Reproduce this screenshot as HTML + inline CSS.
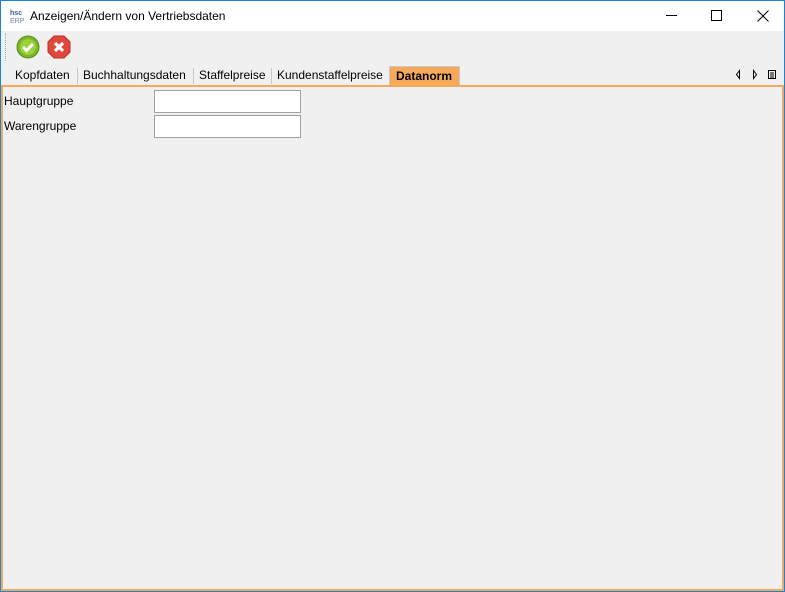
<!DOCTYPE html>
<html><head><style>
*{margin:0;padding:0;box-sizing:border-box}
body{width:785px;height:592px;background:#f0f0f0;font-family:"Liberation Sans",Arial,sans-serif;font-size:12px;color:#000;position:relative;overflow:hidden}
.frame{position:absolute;left:0;top:0;width:785px;height:592px;border:1px solid #1883d7;}
.title{position:absolute;left:1px;top:1px;width:783px;height:30px;background:#fff}
.title span{position:absolute;left:29px;top:8px;font-size:12px}
.tab{position:absolute;top:66px;height:20px;line-height:19px;font-size:12px;padding:0 4px}
.sep{position:absolute;top:68px;width:1px;height:16px;background:#c8c8c8}
.content{position:absolute;left:1px;top:85px;width:783px;height:506px;border:2px solid #f7a95a;border-bottom-width:2px}
.lbl{position:absolute;left:4px;font-size:12px}
.inp{position:absolute;left:154px;width:147px;height:23px;background:#fff;border:1px solid #a0a0a0}
</style></head><body>
<div class="frame"></div>
<div class="title">
<svg style="position:absolute;left:8px;top:7px" width="16" height="16" viewBox="0 0 16 16"><text x="1" y="7" font-size="7" font-weight="bold" fill="#3b5a8a" font-family="Liberation Sans">hsc</text><text x="1" y="15" font-size="7" fill="#6a84aa" font-family="Liberation Sans">ERP</text></svg>
<span>Anzeigen/Ändern von Vertriebsdaten</span>
<div style="position:absolute;left:665px;top:14px;width:11px;height:1px;background:#000"></div>
<div style="position:absolute;left:710px;top:9px;width:11px;height:11px;border:1px solid #000"></div>
<svg style="position:absolute;left:756px;top:9px" width="12" height="12"><path d="M0.5 0.5L11.5 11.5M11.5 0.5L0.5 11.5" stroke="#000" stroke-width="1"/></svg>
</div>
<div style="position:absolute;left:5px;top:33px;width:2px;height:28px;border-left:1px dotted #aaa"></div>
<svg style="position:absolute;left:16px;top:35px" width="24" height="24"><circle cx="12" cy="12" r="11" fill="#7ab52a" stroke="#5a8f1a"/><circle cx="12" cy="12" r="8" fill="#9bd13a"/><path d="M7 12l3.5 3.5L17 9" stroke="#fff" stroke-width="3" fill="none"/></svg>
<svg style="position:absolute;left:47px;top:35px" width="24" height="24"><polygon points="7,1 17,1 23,7 23,17 17,23 7,23 1,17 1,7" fill="#e0483a" stroke="#b83228"/><path d="M8 8l8 8M16 8l-8 8" stroke="#fff" stroke-width="3.2"/></svg>
<div class="tab" style="left:11px">Kopfdaten</div>
<div class="sep" style="left:77px"></div>
<div class="tab" style="left:79px">Buchhaltungsdaten</div>
<div class="sep" style="left:193px"></div>
<div class="tab" style="left:195px">Staffelpreise</div>
<div class="sep" style="left:271px"></div>
<div class="tab" style="left:273px">Kundenstaffelpreise</div>
<div class="tab" style="left:389px;width:71px;background:#f7a95a;border:1px solid #c9c9c9;border-bottom:none;font-weight:bold;padding-left:6px">Datanorm</div>
<svg style="position:absolute;left:735px;top:69px" width="45" height="11"><path d="M4.5 1.5L1.5 5.5L4.5 9.5Z" fill="none" stroke="#000"/><path d="M18.5 1.5L21.5 5.5L18.5 9.5Z" fill="none" stroke="#000"/><rect x="33.5" y="1.5" width="7" height="8" fill="none" stroke="#000"/><path d="M35 4h4M35 6h4M35 8h4" stroke="#000"/></svg>
<div class="content"></div>
<div class="lbl" style="top:94px">Hauptgruppe</div>
<div class="inp" style="top:90px"></div>
<div class="lbl" style="top:119px">Warengruppe</div>
<div class="inp" style="top:115px"></div>
</body></html>
